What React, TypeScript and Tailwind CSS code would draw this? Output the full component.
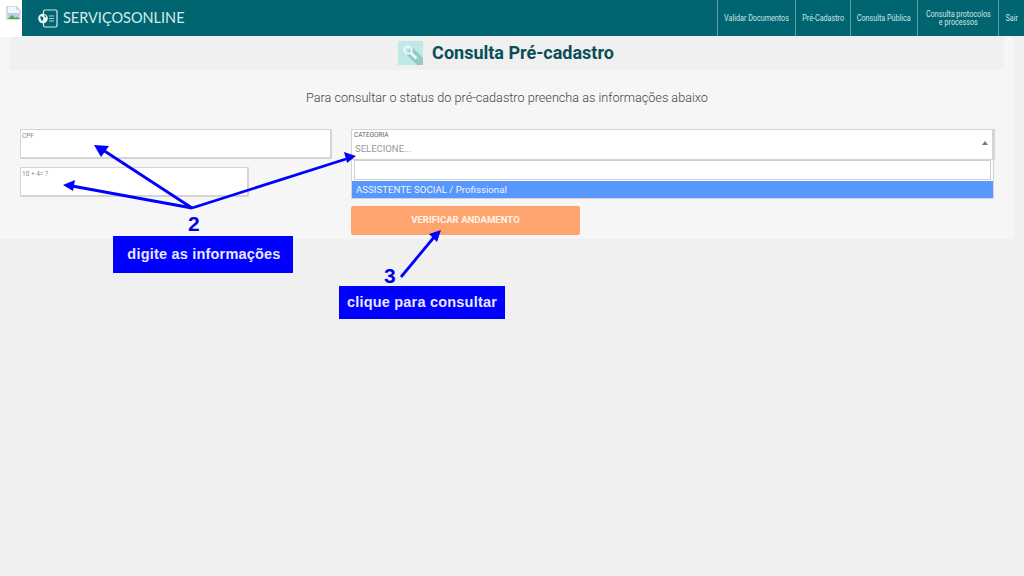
const navItems = [
  { lines: ['Validar Documentos'], w: 'w-[78px]' },
  { lines: ['Pré-Cadastro'], w: 'w-[55px]' },
  { lines: ['Consulta Pública'], w: 'w-[67px]' },
  { lines: ['Consulta protocolos', 'e processos'], w: 'w-[81px]' },
  { lines: ['Sair'], w: 'w-[26px]' },
];

function BrokenImage() {
  return (
    <svg width="16" height="16" viewBox="0 0 16 16" className="mt-[6px] ml-[6px]">
      <path d="M1 0h9l4 4v9H1z" fill="#f4f6fa" stroke="#b4bac6" strokeWidth="1" />
      <path d="M10 0v4h4z" fill="#d5dae4" />
      <path d="M2 7h11v5H2z" fill="#b9cdf0" />
      <path d="M2 13l4-4 3 3 2-1 3 2z" fill="#4fa83d" />
    </svg>
  );
}

function Logo() {
  return (
    <svg width="20" height="19" viewBox="0 0 20 19" fill="none">
      <rect x="5.5" y="1" width="13.5" height="17" rx="1.5" stroke="#d5ecec" strokeWidth="1.2" />
      <circle cx="5" cy="9.5" r="4.8" fill="#eef8f8" />
      <path d="M2 7.5h2.5l1 2-1.5 3-1-2zM6 5.5l2.5 2-1.5 1z" fill="#006570" />
      <path d="M11 7h5M11 9.5h5M11 12h5" stroke="#a9d5d6" strokeWidth="1.2" />
    </svg>
  );
}

function SearchBadge() {
  return (
    <svg width="25" height="24" viewBox="0 0 25 24">
      <rect width="25" height="24" fill="#c0e8e6" />
      <path d="M14 6L25 17V24H19L8 13z" fill="#95c9c8" />
      <circle cx="10" cy="9" r="3.6" fill="none" stroke="#eef9f8" strokeWidth="2" />
      <path d="M13 12l5.5 5.5" stroke="#eef9f8" strokeWidth="2.6" />
    </svg>
  );
}

function Header() {
  return (
    <header className="flex h-[37px] bg-white">
      <div className="w-[22px] shrink-0">
        <BrokenImage />
      </div>
      <div className="flex flex-1 items-center border-b border-[#e8f0f0] bg-[#006570]">
        <div className="ml-[16px] flex items-center gap-[5px]">
          <Logo />
          <span className="font-['Lato',sans-serif] text-[14.5px] text-[#d5ecec]">SERVIÇOSONLINE</span>
        </div>
        <nav className="ml-auto flex h-full">
          {navItems.map((item) => (
            <div
              key={item.lines[0]}
              className={`${item.w} flex h-full flex-col items-center justify-center overflow-hidden whitespace-nowrap border-l border-[#5c9da3] font-['Roboto',sans-serif] text-[9px] leading-[8.5px] text-[#cfe6e6]`}
            >
              {item.lines.map((line) => (
                <span key={line} className="inline-block scale-x-[0.8]">{line}</span>
              ))}
            </div>
          ))}
        </nav>
      </div>
    </header>
  );
}

function FieldBox({ label, width }: { label: string; width: string }) {
  return (
    <div className={`${width} h-[30px] rounded-[1px] border border-b-2 border-r-2 border-[#d4d4d4] bg-white pl-[1px] pt-[1px] font-['Roboto',sans-serif] text-[6.5px] leading-[11px] text-[#888]`}>
      {label}
    </div>
  );
}

function Annotations() {
  return (
    <div className="pointer-events-none absolute inset-0">
      <svg width="1024" height="576" viewBox="0 0 1024 576" className="absolute inset-0" fill="none">
        <g stroke="#0000ff" strokeWidth="2.8">
          <path d="M192 208L103 150" />
          <path d="M192 208L72 186" />
          <path d="M192 208L346 159" />
          <path d="M401 277L435 236" />
        </g>
        <g fill="#0000ff">
          <path d="M94 145L109 146L101 157z" />
          <path d="M63 185L75 180L73 191z" />
          <path d="M356 156L344 152L347 163z" />
          <path d="M441 230L429 234L437 242z" />
        </g>
      </svg>
      <span className="absolute left-[188px] top-[213px] font-['Liberation_Sans',sans-serif] text-[21px] font-bold leading-[22px] text-[#0000e6]">2</span>
      <span className="absolute left-[384px] top-[265px] font-['Liberation_Sans',sans-serif] text-[21px] font-bold leading-[22px] text-[#0000e6]">3</span>
      <div className="absolute left-[113px] top-[236px] flex h-[37px] w-[180px] items-center justify-center bg-[#0000ff] pl-[2px] font-['Liberation_Sans',sans-serif] text-[14.5px] font-bold tracking-[0.2px] text-[#e8e8ff]">
        digite as informações
      </div>
      <div className="absolute left-[339px] top-[286px] flex h-[33px] w-[166px] items-center justify-center bg-[#0000ff] font-['Liberation_Sans',sans-serif] text-[14.5px] font-bold tracking-[0.2px] text-[#e8e8ff]">
        clique para consultar
      </div>
    </div>
  );
}

export default function App() {
  return (
    <div className="relative h-[576px] w-[1024px] overflow-hidden bg-[#f0f0f0]">
      <Header />
      <main className="h-[202px] w-[1014px] bg-[#f6f6f6] px-[10px]">
        <div className="flex h-[33px] items-center justify-center gap-[9px] bg-[#f0f0f0] pb-[2px] pr-[2px]">
          <SearchBadge />
          <h1 className="font-['Roboto',sans-serif] text-[18px] font-bold text-[#0a4f56]">Consulta Pré-cadastro</h1>
        </div>
        <p className="mt-[20px] text-center font-['Roboto',sans-serif] text-[12.65px] font-light leading-[16px] text-[#444]">
          Para consultar o status do pré-cadastro preencha as informações abaixo
        </p>
        <div className="mt-[23px] flex gap-[20px] pl-[10px]">
          <div className="flex w-[311px] flex-col gap-[8px]">
            <FieldBox label="CPF" width="w-[312px]" />
            <FieldBox label="10 + 4= ?" width="w-[229px]" />
          </div>
          <div className="w-[644px]">
            <div className="relative h-[31px] border border-r-[3px] border-[#d4d4d4] bg-white pl-[2px] font-['Roboto',sans-serif]">
              <div className="text-[6.5px] leading-[11px] text-[#666]">CATEGORIA</div>
              <div className="pl-[1px] text-[9.5px] leading-[15px] text-[#999]">SELECIONE...</div>
              <div className="absolute right-[4px] top-[11px] h-0 w-0 border-x-[3px] border-b-[4px] border-x-transparent border-b-[#777]" />
            </div>
            <div className="w-[643px] border border-t-0 border-[#d4d4d4] bg-white">
              <div className="px-[2px] pb-[1px]">
                <div className="h-[20px] w-[637px] border border-[#cfcfcf] bg-white" />
              </div>
              <div className="h-[17px] bg-[#5897fb] pl-[4px] font-['Roboto',sans-serif] text-[9.7px] leading-[17px] text-[#eef4ff]">
                ASSISTENTE SOCIAL / Profissional
              </div>
            </div>
            <button className="mt-[7px] block h-[29px] w-[229px] rounded-[2px] bg-[#fda46f] text-center font-['Roboto',sans-serif] text-[9.6px] font-bold text-[#fff3ea]">
              VERIFICAR ANDAMENTO
            </button>
          </div>
        </div>
      </main>
      <Annotations />
    </div>
  );
}
